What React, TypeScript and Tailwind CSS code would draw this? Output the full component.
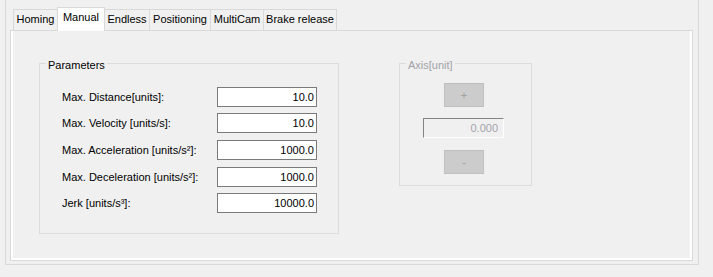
import React from "react";

const tabs = [
  { label: "Homing", w: "w-[45px]" },
  { label: "Manual", w: "w-[48px]", selected: true },
  { label: "Endless", w: "w-[46px]" },
  { label: "Positioning", w: "w-[62px]" },
  { label: "MultiCam", w: "w-[54px]" },
  { label: "Brake release", w: "w-[74px]" },
];

const rows = [
  { label: "Max. Distance[units]:", value: "10.0", mt: "mt-0" },
  { label: "Max. Velocity [units/s]:", value: "10.0", mt: "mt-[6px]" },
  { label: "Max. Acceleration [units/s²]:", value: "1000.0", mt: "mt-[7px]" },
  { label: "Max. Deceleration [units/s²]:", value: "1000.0", mt: "mt-[7px]" },
  { label: "Jerk [units/s³]:", value: "10000.0", mt: "mt-[6px]" },
];

export default function App() {
  return (
    <div className="w-[713px] h-[277px] overflow-hidden bg-[#f0f0f0] font-['Liberation_Sans',Arial,sans-serif] text-[11px] leading-[13px] text-black">
      <div className="ml-[5px] w-[694px] h-[265px] border-x border-b border-[#d9d9d9] pl-[4px] pt-[7px]">
        {/* Tab strip */}
        <div className="flex items-end h-[23px] pl-[3px]">
          {tabs.map((t, i) =>
            t.selected ? (
              <div
                key={t.label}
                className={`relative z-10 -mb-px h-[24px] ${t.w} ${i > 0 ? "-ml-px" : ""} border-x border-t border-[#d9d9d9] bg-white flex justify-center pt-[3px] whitespace-nowrap`}
              >
                {t.label}
              </div>
            ) : (
              <div
                key={t.label}
                className={`h-[21px] ${t.w} ${i > 0 ? "-ml-px" : ""} border-x border-t border-[#d9d9d9] bg-[#f0f0f0] flex justify-center pt-[3px] whitespace-nowrap`}
              >
                {t.label}
              </div>
            )
          )}
        </div>
        {/* Tab page */}
        <div className="w-[683px] h-[231px] border border-[#d9d9d9]">
          <div className="h-full border-x-2 border-b-2 border-white flex items-start">
            {/* Parameters group */}
            <div className="relative ml-[26px] mt-[32px] w-[300px] h-[171px] border border-[#dcdcdc] pl-[22px] pt-[23px]">
              <span className="absolute -top-[5px] left-[6px] px-[2px] bg-[#f0f0f0]">Parameters</span>
              {rows.map((r) => (
                <div key={r.label} className={`flex items-center ${r.mt}`}>
                  <div className="w-[155px] whitespace-nowrap">{r.label}</div>
                  <div className="w-[100px] h-[20px] border border-[#7a7a7a] bg-white flex items-center justify-end pr-[2px]">
                    {r.value}
                  </div>
                </div>
              ))}
            </div>
            {/* Axis group (disabled) */}
            <div className="relative ml-[60px] mt-[32px] w-[133px] h-[123px] border border-[#dcdcdc] flex flex-col pt-[19px]">
              <span className="absolute -top-[5px] left-[6px] px-[2px] bg-[#f0f0f0] text-[#a2a2a8]">Axis[unit]</span>
              <div className="ml-[44px] w-[40px] h-[24px] bg-[#cccccc] border border-[#bfbfbf] flex items-center justify-center text-[#a0a0a0]">
                +
              </div>
              <div className="ml-[23px] mt-[11px] w-[81px] h-[20px] border-t border-l border-[#838383] border-r border-b border-r-white border-b-white bg-[#f0f0f0] flex items-center justify-end pr-[5px] text-[#a3a3ad]">
                0.000
              </div>
              <div className="ml-[44px] mt-[12px] w-[40px] h-[24px] bg-[#cccccc] border border-[#bfbfbf] flex items-center justify-center text-[#a0a0a0]">
                -
              </div>
            </div>
          </div>
        </div>
      </div>
    </div>
  );
}
